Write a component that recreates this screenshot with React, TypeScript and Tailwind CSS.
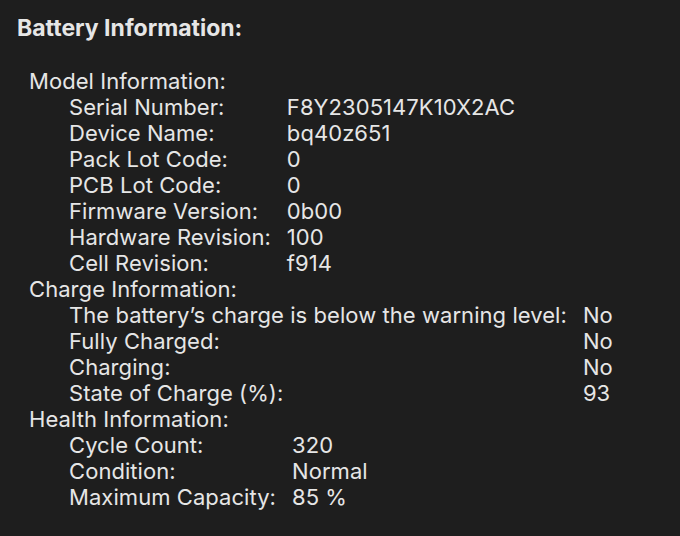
const model = [
  ['Serial Number:', 'F8Y2305147K10X2AC'],
  ['Device Name:', 'bq40z651'],
  ['Pack Lot Code:', '0'],
  ['PCB Lot Code:', '0'],
  ['Firmware Version:', '0b00'],
  ['Hardware Revision:', '100'],
  ['Cell Revision:', 'f914'],
]

const charge = [
  ['The battery\u2019s charge is below the warning level:', 'No'],
  ['Fully Charged:', 'No'],
  ['Charging:', 'No'],
  ['State of Charge (%):', '93'],
]

const health = [
  ['Cycle Count:', '320'],
  ['Condition:', 'Normal'],
  ['Maximum Capacity:', '85 %'],
]

function Section({ title, rows }: { title: string; rows: string[][] }) {
  return (
    <div>
      <div className="h-[26px]">{title}</div>
      <div className="grid grid-cols-[auto_auto] justify-start gap-x-4 pl-10">
        {rows.map(([label, value]) => (
          <div key={label} className="contents">
            <div className="h-[26px] whitespace-nowrap">{label}</div>
            <div className="h-[26px] whitespace-nowrap">{value}</div>
          </div>
        ))}
      </div>
    </div>
  )
}

export default function App() {
  return (
    <div
      className="w-[680px] h-[536px] bg-[#1e1e1e] text-[#e6e6e6] overflow-hidden"
      style={{ fontFamily: 'Inter, "Liberation Sans", sans-serif' }}
    >
      <div className="pl-[17px] pt-[15px] text-[23px] font-bold leading-[26px]">Battery Information:</div>
      <div className="pl-[29px] pt-[27px] text-[22px] tracking-[0.06px] leading-[26px]">
        <Section title="Model Information:" rows={model} />
        <Section title="Charge Information:" rows={charge} />
        <Section title="Health Information:" rows={health} />
      </div>
    </div>
  )
}
